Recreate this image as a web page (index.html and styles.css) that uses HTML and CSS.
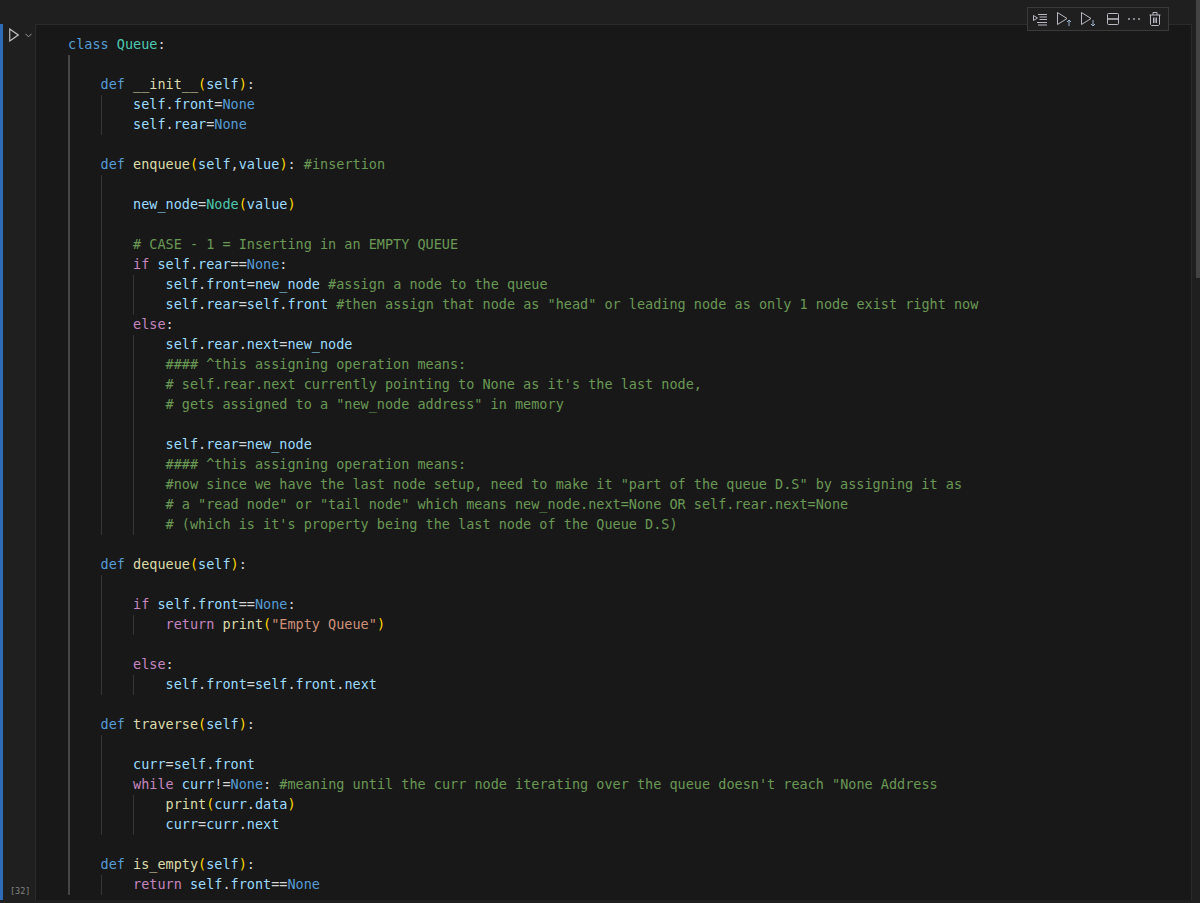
FILE: index.html
```html
<!DOCTYPE html>
<html lang="en">
<head>
<meta charset="utf-8">
<title>Queue notebook cell</title>
<link rel="stylesheet" href="styles.css">
</head>
<body>
<div class="scroll-thumb"></div>
<div class="toolbar">
  <svg class="tool" viewBox="0 0 16 16"><path d="M1.5 4.5v5l4 -2.5z" /><path d="M6 3.5h9M7.5 6h7.5M7.5 8.5h7.5M5 11.5h10M6 14h9" /></svg>
  <svg class="tool" viewBox="0 0 16 16"><path d="M1.5 1.5v12l9.5 -6z" /><path d="M13 15v-6M11 11l2 -2 2 2" class="accent"/></svg>
  <svg class="tool" viewBox="0 0 16 16"><path d="M1.5 1.5v12l9.5 -6z" /><path d="M13 9v6M11 13l2 2 2 -2" class="accent"/></svg>
  <svg class="tool" viewBox="0 0 16 16"><rect x="2.5" y="2.5" width="11" height="11" rx="1"/><path d="M2.5 8h11" stroke-width="1.6"/></svg>
  <svg class="tool tool-tight" viewBox="0 0 16 16"><circle cx="3" cy="8" r=".6"/><circle cx="8" cy="8" r=".6"/><circle cx="13" cy="8" r=".6"/></svg>
  <svg class="tool tool-tight" viewBox="0 0 16 16"><path d="M2.5 4h11M6 4V1.5h4V4M3.5 4v9.5l1 1h7l1 -1V4M6.5 6.5v5.5M8 6.5v5.5M9.5 6.5v5.5"/></svg>
</div>
<main class="cell">
  <div class="focus-bar"></div>
  <div class="gutter">
    <div class="run">
      <svg class="run-icon" viewBox="0 0 10 14"><path d="M.75 1v12l8.5 -6z"/></svg>
      <svg class="run-chevron" viewBox="0 0 8 5"><path d="M.5 .5l3.5 3.5 3.5 -3.5"/></svg>
    </div>
    <div class="count">[32]</div>
  </div>
  <div class="editor">
<div class="line"><i class="k">class</i> <i class="c">Queue</i><i class="o">:</i></div>
<div class="block strong">
  <div class="line"> </div>
  <div class="line"><i class="k">def</i> <i class="f">__init__</i><i class="p">(</i><i class="v">self</i><i class="p">)</i><i class="o">:</i></div>
  <div class="block">
    <div class="line"><i class="v">self</i><i class="o">.</i><i class="v">front</i><i class="o">=</i><i class="k">None</i></div>
    <div class="line"><i class="v">self</i><i class="o">.</i><i class="v">rear</i><i class="o">=</i><i class="k">None</i></div>
  </div>
  <div class="line"> </div>
  <div class="line"><i class="k">def</i> <i class="f">enqueue</i><i class="p">(</i><i class="v">self</i><i class="o">,</i><i class="v">value</i><i class="p">)</i><i class="o">:</i> <i class="g">#insertion</i></div>
  <div class="block">
    <div class="line"> </div>
    <div class="line"><i class="v">new_node</i><i class="o">=</i><i class="c">Node</i><i class="p">(</i><i class="v">value</i><i class="p">)</i></div>
    <div class="line"> </div>
    <div class="line"><i class="g"># CASE - 1 = Inserting in an EMPTY QUEUE</i></div>
    <div class="line"><i class="m">if</i> <i class="v">self</i><i class="o">.</i><i class="v">rear</i><i class="o">==</i><i class="k">None</i><i class="o">:</i></div>
    <div class="block">
      <div class="line"><i class="v">self</i><i class="o">.</i><i class="v">front</i><i class="o">=</i><i class="v">new_node</i> <i class="g">#assign a node to the queue</i></div>
      <div class="line"><i class="v">self</i><i class="o">.</i><i class="v">rear</i><i class="o">=</i><i class="v">self</i><i class="o">.</i><i class="v">front</i> <i class="g">#then assign that node as "head" or leading node as only 1 node exist right now</i></div>
    </div>
    <div class="line"><i class="m">else</i><i class="o">:</i></div>
    <div class="block">
      <div class="line"><i class="v">self</i><i class="o">.</i><i class="v">rear</i><i class="o">.</i><i class="v">next</i><i class="o">=</i><i class="v">new_node</i></div>
      <div class="line"><i class="g">#### ^this assigning operation means:</i></div>
      <div class="line"><i class="g"># self.rear.next currently pointing to None as it's the last node,</i></div>
      <div class="line"><i class="g"># gets assigned to a "new_node address" in memory</i></div>
      <div class="line"> </div>
      <div class="line"><i class="v">self</i><i class="o">.</i><i class="v">rear</i><i class="o">=</i><i class="v">new_node</i></div>
      <div class="line"><i class="g">#### ^this assigning operation means:</i></div>
      <div class="line"><i class="g">#now since we have the last node setup, need to make it "part of the queue D.S" by assigning it as</i></div>
      <div class="line"><i class="g"># a "read node" or "tail node" which means new_node.next=None OR self.rear.next=None</i></div>
      <div class="line"><i class="g"># (which is it's property being the last node of the Queue D.S)</i></div>
    </div>
  </div>
  <div class="line"> </div>
  <div class="line"><i class="k">def</i> <i class="f">dequeue</i><i class="p">(</i><i class="v">self</i><i class="p">)</i><i class="o">:</i></div>
  <div class="block">
    <div class="line"> </div>
    <div class="line"><i class="m">if</i> <i class="v">self</i><i class="o">.</i><i class="v">front</i><i class="o">==</i><i class="k">None</i><i class="o">:</i></div>
    <div class="block">
      <div class="line"><i class="m">return</i> <i class="f">print</i><i class="p">(</i><i class="s">"Empty Queue"</i><i class="p">)</i></div>
    </div>
    <div class="line"> </div>
    <div class="line"><i class="m">else</i><i class="o">:</i></div>
    <div class="block">
      <div class="line"><i class="v">self</i><i class="o">.</i><i class="v">front</i><i class="o">=</i><i class="v">self</i><i class="o">.</i><i class="v">front</i><i class="o">.</i><i class="v">next</i></div>
    </div>
  </div>
  <div class="line"> </div>
  <div class="line"><i class="k">def</i> <i class="f">traverse</i><i class="p">(</i><i class="v">self</i><i class="p">)</i><i class="o">:</i></div>
  <div class="block">
    <div class="line"> </div>
    <div class="line"><i class="v">curr</i><i class="o">=</i><i class="v">self</i><i class="o">.</i><i class="v">front</i></div>
    <div class="line"><i class="m">while</i> <i class="v">curr</i><i class="o">!=</i><i class="k">None</i><i class="o">:</i> <i class="g">#meaning until the curr node iterating over the queue doesn't reach "None Address</i></div>
    <div class="block">
      <div class="line"><i class="f">print</i><i class="p">(</i><i class="v">curr</i><i class="o">.</i><i class="v">data</i><i class="p">)</i></div>
      <div class="line"><i class="v">curr</i><i class="o">=</i><i class="v">curr</i><i class="o">.</i><i class="v">next</i></div>
    </div>
  </div>
  <div class="line"> </div>
  <div class="line"><i class="k">def</i> <i class="f">is_empty</i><i class="p">(</i><i class="v">self</i><i class="p">)</i><i class="o">:</i></div>
  <div class="block">
    <div class="line"><i class="m">return</i> <i class="v">self</i><i class="o">.</i><i class="v">front</i><i class="o">==</i><i class="k">None</i></div>
  </div>
</div>
  </div>
</main>
</body>
</html>
```
FILE: styles.css
```css
* { box-sizing: border-box; }
html, body { margin: 0; height: 903px; overflow: hidden; background: #1f1f1f; }
body { padding: 24px 8px 3px 0; position: relative; }
.scroll-thumb { position: absolute; right: 0; top: 0; width: 4px; height: 278px; background: #434343; }
.toolbar {
  position: absolute; left: 1027px; top: 7px; width: 142px; height: 24px;
  display: flex; align-items: center; gap: 8.4px; padding: 0 0 0 3.5px;
  background: #1f1f1f; border: 1px solid #3a3a3a;
}
.tool { width: 16px; height: 16px; flex: none; fill: none; stroke: #b9b9c4; stroke-width: 1; }
.tool-tight { margin-left: -3px; }
.tool .accent { stroke: #9cb4d0; }
.cell { display: flex; height: 876px; }
.focus-bar { width: 3px; background: #2f6cb8; flex: none; }
.gutter { width: 32px; flex: none; display: flex; flex-direction: column; justify-content: space-between; padding: 4px 0 3px 6px; }
.run { display: flex; align-items: center; gap: 6px; }
.run-icon { width: 10px; height: 14px; fill: none; stroke: #c8c8c8; stroke-width: 1.1; }
.run-chevron { width: 7px; height: 5px; fill: none; stroke: #a8a8a8; stroke-width: 1; }
.count { font: 8.5px/12px "DejaVu Sans Mono", monospace; color: #858585; margin-left: 1px; }
.editor {
  flex: 1; background: #181818; border: 1px solid #2b2b2b; border-bottom: 0;
  padding: 10px 0 0 32px; overflow: hidden;
  font: 13.5px/18px "DejaVu Sans Mono", monospace; color: #d4d4d4;
}
.line { height: 20px; white-space: pre; }
.line i { font-style: normal; }
.block { padding-left: 32.5px; box-shadow: inset 1px 0 0 #353535; }
.block.strong { box-shadow: inset 2px 0 0 #454545; }
.k { color: #569cd6; }
.c { color: #4ec9b0; }
.f { color: #dcdcaa; }
.v { color: #9cdcfe; }
.p { color: #ffd700; }
.m { color: #c586c0; }
.g { color: #6a9955; }
.s { color: #ce9178; }
.o { color: #d4d4d4; }
```
